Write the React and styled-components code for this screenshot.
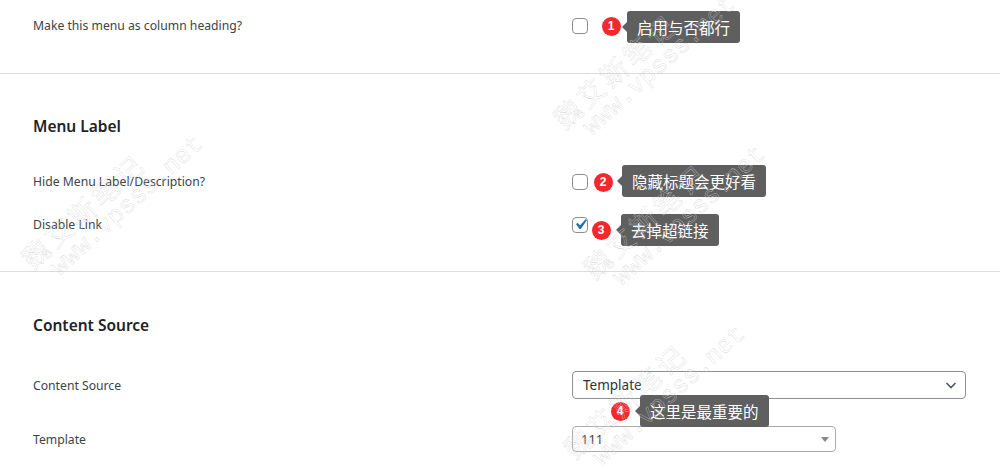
import React from 'react';
import styled, { createGlobalStyle } from 'styled-components';

const Global = createGlobalStyle`
  html, body { margin: 0; padding: 0; background: #fff; }
  body { font-family: "Noto Sans", "Noto Sans CJK SC", sans-serif; }
  * { box-sizing: border-box; }
`;

const Page = styled.div`
  position: relative;
  width: 1000px;
  height: 469px;
  overflow: hidden;
  background: #fff;
`;

const Section = styled.section`
  padding: ${p => p.$pad};
  border-bottom: ${p => (p.$divider ? '1px solid #dcdcde' : 'none')};
`;

const Heading = styled.h3`
  margin: 0 0 ${p => p.$gap}px 33px;
  font-size: 15.5px;
  font-weight: 600;
  line-height: 24px;
  color: #1d2327;
`;

const Row = styled.div`
  display: grid;
  grid-template-columns: 539px 1fr;
  align-items: center;
  height: ${p => p.$h}px;
  margin-top: ${p => p.$mt || 0}px;
  padding-left: 33px;
`;

const Label = styled.div`
  font-size: 12.2px;
  color: #3c434a;
  line-height: 18px;
  margin-top: ${p => p.$shift || 0}px;
`;

const Control = styled.div`
  display: flex;
  align-items: center;
`;

const Checkbox = styled.span`
  position: relative;
  display: inline-block;
  width: 16px;
  height: 16px;
  border: 1px solid #8c8f94;
  border-radius: 4px;
  background: #fff;
  svg {
    position: absolute;
    left: -3px;
    top: -4px;
    width: 21px;
    height: 21px;
  }
`;

const Select = styled.div`
  display: flex;
  align-items: center;
  justify-content: space-between;
  width: ${p => p.$w}px;
  height: ${p => p.$h}px;
  padding: 0 ${p => p.$pr}px 0 ${p => p.$pl}px;
  border: 1px solid ${p => p.$border};
  border-radius: 4px;
  font-size: ${p => p.$fs}px;
  color: ${p => p.$color};
  background: #fff;
`;

const Caret = styled.span`
  width: 0;
  height: 0;
  border-left: 4px solid transparent;
  border-right: 4px solid transparent;
  border-top: 5px solid #888;
`;

const Badge = styled.span`
  position: absolute;
  left: ${p => p.$x - 9.5}px;
  top: ${p => p.$y - 9.5}px;
  width: 19px;
  height: 19px;
  border-radius: 50%;
  background: #f3282d;
  color: #fff;
  font-size: 12px;
  font-weight: 700;
  line-height: 19px;
  text-align: center;
  font-family: "Liberation Sans", Arial, sans-serif;
  z-index: 3;
`;

const Tip = styled.div`
  position: absolute;
  left: ${p => p.$x}px;
  top: ${p => p.$y}px;
  height: 32px;
  padding: 0 10px;
  background: #5f5f5f;
  border-radius: 3px;
  color: #fff;
  font-family: "Noto Sans CJK SC", sans-serif;
  font-size: 15.5px;
  line-height: 32px;
  white-space: nowrap;
  z-index: 3;
  &::before {
    content: '';
    position: absolute;
    left: -5px;
    top: 11px;
    border-top: 5px solid transparent;
    border-bottom: 5px solid transparent;
    border-right: 5px solid #5f5f5f;
  }
`;

const Watermark = styled.div`
  position: absolute;
  left: ${p => p.$x}px;
  top: ${p => p.$y}px;
  transform: rotate(-42deg);
  transform-origin: 0 0;
  color: transparent;
  -webkit-text-stroke: 0.3px #d2d2d2;
  pointer-events: none;
  z-index: 4;
  line-height: 1.05;
  white-space: nowrap;
`;

const WmCn = styled.div`
  font-family: "Noto Sans CJK SC", serif;
  font-size: 27px;
  letter-spacing: 4px;
`;

const WmEn = styled.div`
  font-family: "Liberation Mono", monospace;
  font-size: 25px;
  margin-left: 16px;
`;

const Check = () => (
  <svg viewBox="0 0 20 20">
    <path fill="#2271b1" d="M14.83 4.89l1.34.94-5.81 8.38H9.02L5.78 9.67l1.34-1.25 2.57 2.4z" />
  </svg>
);

const Chevron = () => (
  <svg width="14" height="14" viewBox="0 0 14 14">
    <path d="M2.5 5l4.5 4.5L11.5 5" fill="none" stroke="#50575e" strokeWidth="1.6" />
  </svg>
);

const Mark = ({ x, y }) => (
  <Watermark $x={x} $y={y}>
    <WmCn>魏艾斯笔记</WmCn>
    <WmEn>www.vpsss.net</WmEn>
  </Watermark>
);

export default function App() {
  return (
    <Page>
      <Global />
      <Section $pad="10px 0 31px" $divider>
        <Row $h={32}>
          <Label>Make this menu as column heading?</Label>
          <Control><Checkbox /></Control>
        </Row>
      </Section>
      <Section $pad="40px 0 25px" $divider>
        <Heading $gap={22}>Menu Label</Heading>
        <Row $h={43}>
          <Label>Hide Menu Label/Description?</Label>
          <Control><Checkbox /></Control>
        </Row>
        <Row $h={43}>
          <Label>Disable Link</Label>
          <Control><Checkbox><Check /></Checkbox></Control>
        </Row>
      </Section>
      <Section $pad="41px 0 0">
        <Heading $gap={34}>Content Source</Heading>
        <Row $h={28}>
          <Label $shift={2}>Content Source</Label>
          <Control>
            <Select $w={394} $h={28} $pl={10} $pr={7} $border="#8c8f94" $fs={13.5} $color="#2c3338">
              Template
              <Chevron />
            </Select>
          </Control>
        </Row>
        <Row $h={26} $mt={27}>
          <Label $shift={2}>Template</Label>
          <Control>
            <Select $w={264} $h={26} $pl={8} $pr={6} $border="#aaa" $fs={13} $color="#444">
              111
              <Caret />
            </Select>
          </Control>
        </Row>
      </Section>

      <Mark x={16} y={252} />
      <Mark x={548} y={112} />
      <Mark x={578} y={262} />
      <Mark x={558} y={442} />

      <Badge $x={611} $y={26}>1</Badge>
      <Tip $x={627} $y={11}>启用与否都行</Tip>
      <Badge $x={603} $y={182}>2</Badge>
      <Tip $x={622} $y={165}>隐藏标题会更好看</Tip>
      <Badge $x={601} $y={230}>3</Badge>
      <Tip $x={621} $y={214}>去掉超链接</Tip>
      <Badge $x={620} $y={411}>4</Badge>
      <Tip $x={640} $y={395}>这里是最重要的</Tip>
    </Page>
  );
}
